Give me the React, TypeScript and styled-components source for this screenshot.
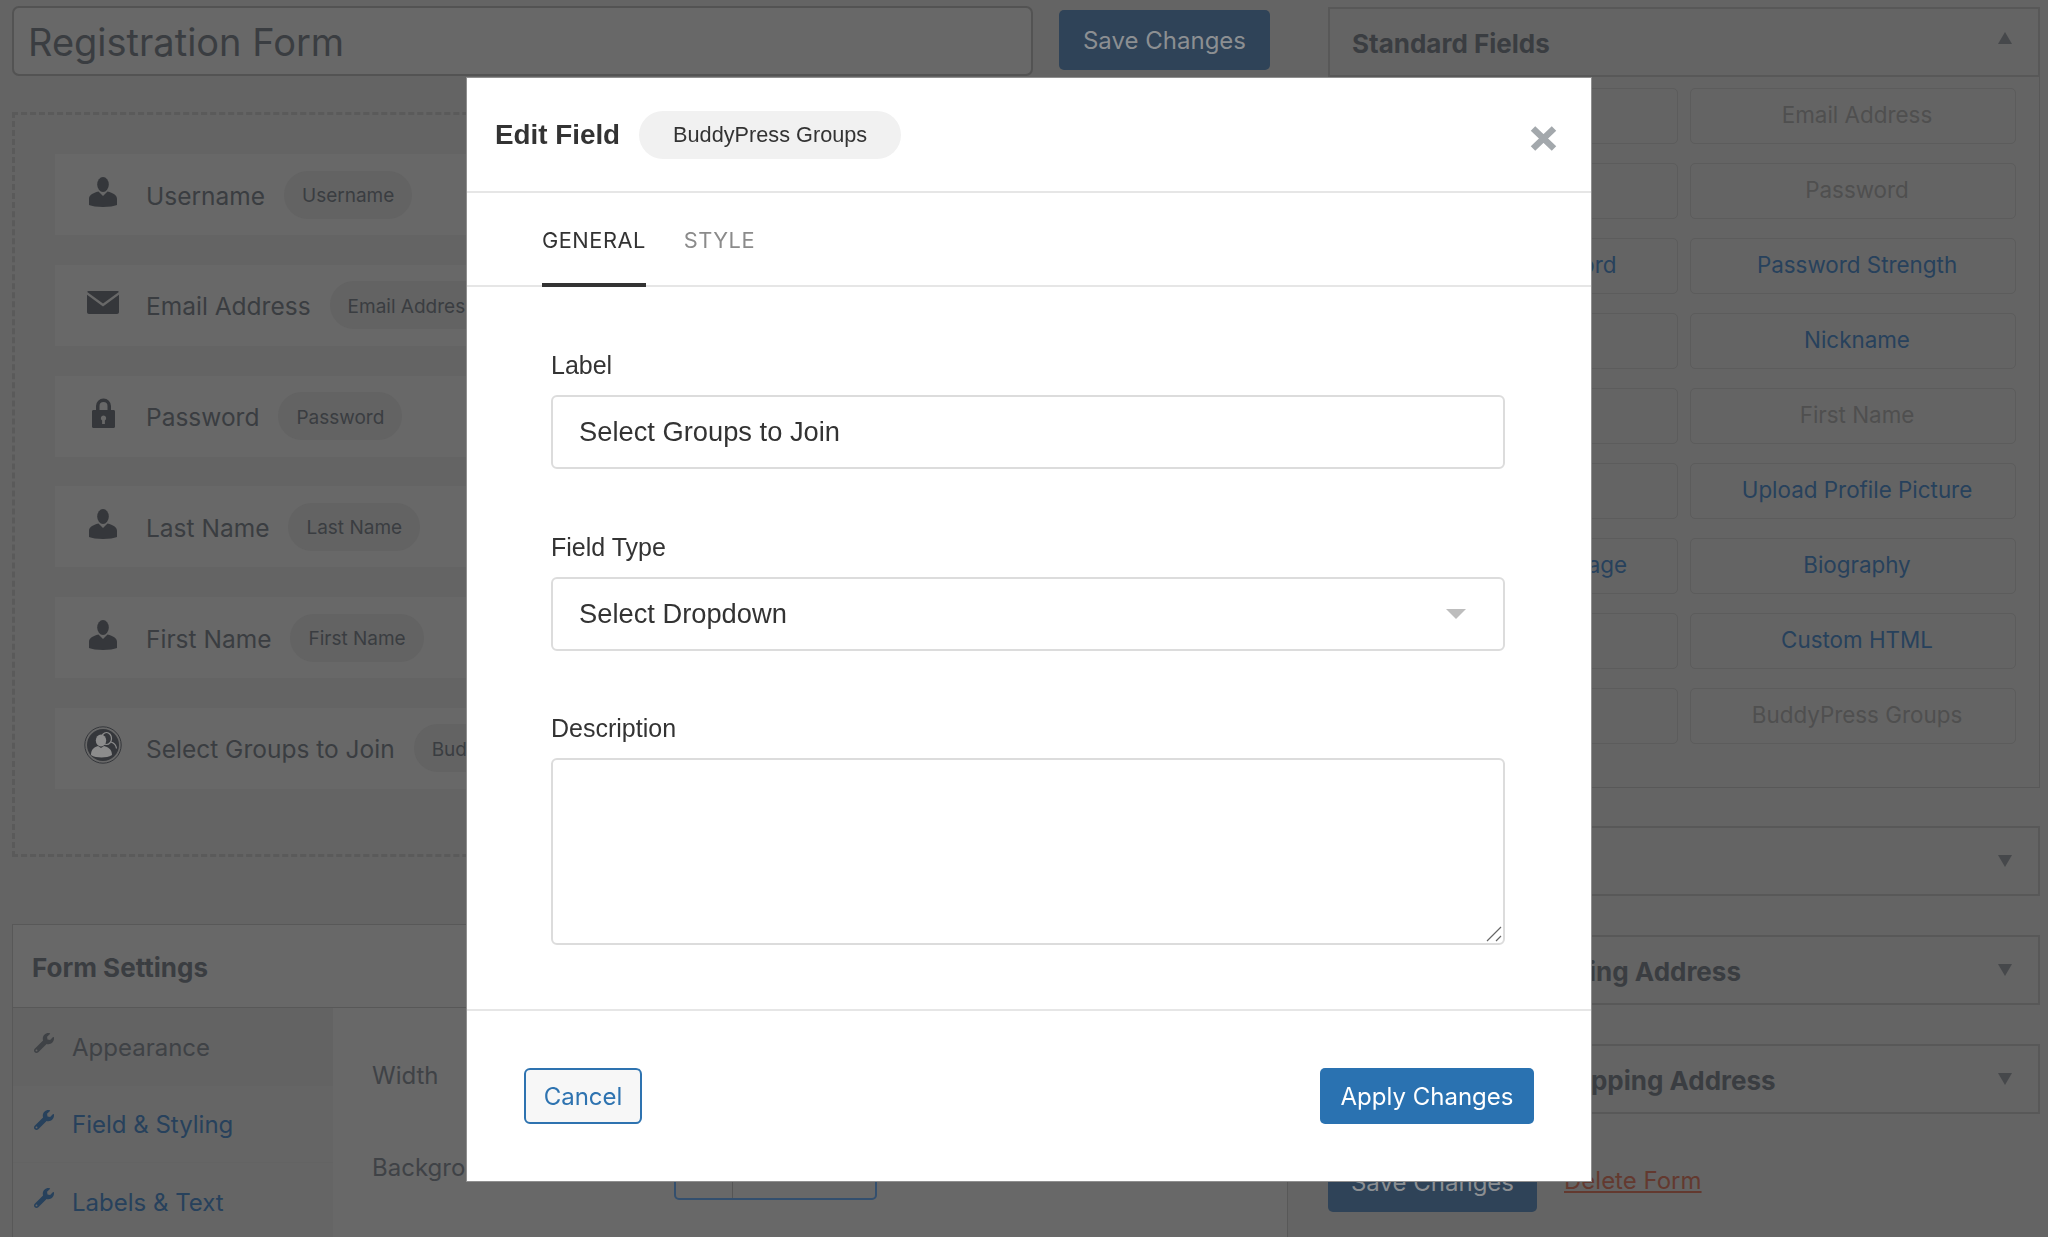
import React from "react"
import styled, { createGlobalStyle } from "styled-components"
import { FaWrench } from "react-icons/fa"

const GlobalStyle = createGlobalStyle`
  * { box-sizing: border-box; }
  html, body { margin: 0; padding: 0; height: 1237px; overflow: hidden; background: #646464; }
  body { font-family: Inter, "Noto Sans", sans-serif; color: #3d4044; }
`

const Page = styled.div`
  display: grid;
  grid-template-columns: 1276px 712px;
  column-gap: 40px;
  align-items: start;
  height: 1237px;
  padding: 6px 0 0 12px;
  overflow: hidden;
`

const LeftColumn = styled.div`
  display: flex;
  flex-direction: column;
`

const TitleRow = styled.div`
  display: flex;
  align-items: center;
  gap: 26px;
`

const TitleInput = styled.div`
  width: 1021px;
  height: 70px;
  display: flex;
  align-items: center;
  padding: 2px 0 0 14px;
  border: 2px solid #535353;
  border-radius: 7px;
  background: #686868;
  font-size: 38px;
  color: #3a3d41;
`

const SaveButton = styled.div<{ $width: number; $lift?: number }>`
  width: ${(p) => p.$width}px;
  height: 60px;
  margin-top: ${(p) => p.$lift ?? 0}px;
  display: flex;
  align-items: center;
  justify-content: center;
  background: #2f4358;
  border-radius: 5px;
  font-size: 24px;
  color: #8c8f92;
`

const DropZone = styled.div`
  margin-top: 36px;
  height: 745px;
  padding: 38px 0 0 39px;
  border: 3px dashed #5a5a5a;
  display: flex;
  flex-direction: column;
  gap: 27.8px;
`

const FieldCard = styled.div`
  height: 83px;
  flex: none;
  display: flex;
  align-items: center;
  padding-left: 29px;
  background: #686868;
  border: 1px solid #646464;
`

const CardIcon = styled.div`
  width: 38px;
  display: flex;
  justify-content: center;
  margin: -6px 24px 0 0;
  color: #35373b;
`

const CardLabel = styled.span`
  margin-top: 2px;
  font-size: 24.5px;
  color: #3a3d41;
`

const NamePill = styled.span`
  margin-left: 19px;
  height: 48px;
  display: flex;
  align-items: center;
  padding: 2px 18px 0;
  border-radius: 24px;
  background: #636363;
  font-size: 19px;
  color: #3a3d41;
`

const SettingsPanel = styled.div`
  margin-top: 67px;
  height: 400px;
  border: 1px solid #585858;
  background: #686868;
`

const SettingsHeader = styled.div`
  height: 83px;
  display: flex;
  align-items: center;
  padding: 2px 0 0 19px;
  border-bottom: 1px solid #585858;
  font-size: 26px;
  font-weight: 700;
  color: #3a3d41;
`

const SettingsBody = styled.div`
  display: flex;
`

const SettingsNav = styled.div`
  width: 320px;
  display: flex;
  flex-direction: column;
  background: #656565;
`

const NavItem = styled.div<{ $active?: boolean }>`
  height: 77.5px;
  display: flex;
  align-items: center;
  gap: 18px;
  padding: 2px 0 0 21px;
  background: ${(p) => (p.$active ? "#636363" : "transparent")};
  border-bottom: 1px solid #636363;
  font-size: 24px;
  color: ${(p) => (p.$active ? "#3f4246" : "#27415c")};

  svg {
    margin-top: -9px;
  }
`

const SettingsContent = styled.div`
  flex: 1;
  display: flex;
  flex-direction: column;
  gap: 35px;
  padding: 37px 0 0 39px;
`

const SettingRow = styled.div`
  height: 60px;
  display: flex;
  align-items: center;
  font-size: 24px;
  color: #3f4246;
`

const SettingName = styled.span`
  width: 302px;
  margin-top: -5px;
`

const ColorControl = styled.div`
  width: 203px;
  height: 60px;
  display: flex;
  border: 2px solid #334f6e;
  border-radius: 5px;
`

const ColorSwatch = styled.div`
  width: 57px;
  border-right: 1px solid #555;
`

const RightColumn = styled.div`
  display: flex;
  flex-direction: column;
  padding-top: 1px;
`

const FieldsPanel = styled.div<{ $gap?: number }>`
  margin-top: ${(p) => p.$gap ?? 0}px;
  display: flex;
  flex-direction: column;
`

const PanelHeader = styled.div`
  height: 70px;
  display: flex;
  align-items: center;
  justify-content: space-between;
  padding: 2px 26px 0 22px;
  border: 2px solid #585858;
  font-size: 26px;
  font-weight: 700;
  color: #3a3d41;
  white-space: nowrap;
`

const Caret = styled.span<{ $up?: boolean }>`
  width: 0;
  height: 0;
  margin-top: ${(p) => (p.$up ? -10 : -2)}px;
  border-left: 7px solid transparent;
  border-right: 7px solid transparent;
  border-${(p) => (p.$up ? "bottom" : "top")}: 12px solid #46484b;
`

const PanelBody = styled.div`
  height: 711px;
  display: grid;
  grid-template-columns: 326px 326px;
  grid-auto-rows: 56px;
  gap: 19px 12px;
  padding: 11px 0 0 23px;
  border: 1px solid #585858;
  border-top: 0;
`

const FieldButton = styled.div<{ $enabled?: boolean }>`
  display: flex;
  align-items: center;
  justify-content: center;
  padding: 0 0 3px 8px;
  border: 1px solid #5c5c5c;
  border-radius: 5px;
  font-size: 22.4px;
  color: ${(p) => (p.$enabled ? "#27415c" : "#4f4f4f")};
`

const PanelFooter = styled.div`
  margin-top: 38px;
  display: flex;
  align-items: center;
  gap: 27px;
`

const DeleteLink = styled.a`
  margin-top: -4px;
  font-size: 24px;
  color: #63392f;
  text-decoration: underline;
`

const Backdrop = styled.div`
  position: fixed;
  inset: 0;
  padding: 78px 0 0 467px;
`

const Modal = styled.div`
  width: 1124px;
  height: 1103px;
  display: flex;
  flex-direction: column;
  background: #fff;
  box-shadow: 0 0 0 1px #8f8f8f;
  color: #333;
`

const ModalHeader = styled.div`
  height: 115px;
  flex: none;
  display: flex;
  align-items: center;
  padding: 0 34px 0 28px;
  border-bottom: 2px solid #e6e6e6;
`

const ModalTitle = styled.h2`
  margin: 0 19px 0 0;
  font-family: "Liberation Sans", Arial, sans-serif;
  font-size: 27.8px;
  font-weight: 700;
  color: #333;
`

const TypePill = styled.span`
  height: 48px;
  display: flex;
  align-items: center;
  padding: 0 34px;
  border-radius: 24px;
  background: #f1f1f1;
  font-family: "Liberation Sans", Arial, sans-serif;
  font-size: 21.7px;
  color: #333;
`

const CloseButton = styled.button`
  margin: 7px 0 0 auto;
  padding: 0;
  border: 0;
  background: none;
  display: flex;
  color: #a3a8ac;
`

const Tabs = styled.div`
  height: 94px;
  flex: none;
  display: flex;
  gap: 38px;
  padding-left: 75px;
  border-bottom: 2px solid #e6e6e6;
`

const Tab = styled.div<{ $active?: boolean }>`
  height: 94px;
  padding-top: 33px;
  font-size: 21.8px;
  letter-spacing: 0.5px;
  line-height: 28px;
  color: ${(p) => (p.$active ? "#333" : "#8b8b8b")};
  border-bottom: ${(p) => (p.$active ? "4px solid #333" : "0")};
`

const FormBody = styled.div`
  flex: 1;
  display: flex;
  flex-direction: column;
  gap: 62.5px;
  padding: 63px 86px 0 84px;
  font-family: "Liberation Sans", Arial, sans-serif;
`

const Field = styled.div`
  display: flex;
  flex-direction: column;
  gap: 15px;
  position: relative;
`

const FieldLabel = styled.label`
  font-size: 25px;
  line-height: 30px;
  color: #333;
`

const TextInput = styled.input`
  width: 100%;
  height: 74px;
  padding: 0 26px;
  border: 2px solid #dcdcdc;
  border-radius: 6px;
  background: #fff;
  font-family: inherit;
  font-size: 27.3px;
  color: #333;
  outline: none;
`

const SelectInput = styled.select`
  width: 100%;
  height: 74px;
  padding: 0 26px;
  border: 2px solid #dcdcdc;
  border-radius: 6px;
  background: #fff;
  font-family: inherit;
  font-size: 27.3px;
  color: #333;
  appearance: none;
  outline: none;
`

const SelectCaret = styled.span`
  position: absolute;
  right: 39px;
  bottom: 32px;
  width: 0;
  height: 0;
  border-left: 10px solid transparent;
  border-right: 10px solid transparent;
  border-top: 10px solid #bdbdbd;
`

const TextArea = styled.textarea`
  width: 100%;
  height: 187px;
  padding: 12px 26px;
  border: 2px solid #dcdcdc;
  border-radius: 6px;
  background: #fff;
  font-family: inherit;
  font-size: 27px;
  outline: none;
  resize: none;
  display: block;
`

const ResizeGrip = styled.svg`
  position: absolute;
  right: 3px;
  bottom: 3px;
`

const ModalFooter = styled.div`
  height: 172px;
  flex: none;
  display: flex;
  justify-content: space-between;
  padding: 57px 57px 0;
  border-top: 2px solid #e6e6e6;
`

const CancelButton = styled.button`
  width: 118px;
  height: 56px;
  border: 2px solid #2e73b0;
  border-radius: 6px;
  background: #f7f7f7;
  font-family: inherit;
  font-size: 24px;
  color: #2e73b0;
`

const ApplyButton = styled.button`
  width: 214px;
  height: 56px;
  border: 0;
  border-radius: 5px;
  background: #2a72b1;
  font-family: inherit;
  font-size: 24px;
  color: #fff;
`

const UserIcon = () => (
  <svg width="28" height="30" viewBox="0 0 28 30" fill="currentColor">
    <ellipse cx="14" cy="7.5" rx="5.8" ry="7.5" />
    <path d="M9.5 14.5 14 19l4.5-4.5c5.5 1.6 9.5 3.4 9.5 7.5v6c-3 1.2-8 2-14 2S3 29.200 0 28v-6c0-4.100 4-5.900 9.500-7.500z" />
  </svg>
)

const MailIcon = () => (
  <svg width="32" height="23" viewBox="0 0 32 23" fill="currentColor">
    <path d="M2 0h28c1 0 1.600.4 1.800 1L16 12.500.2 1C.4.400 1 0 2 0z" />
    <path d="M0 3.800 16 15.500 32 3.800V21c0 1.200-.8 2-2 2H2c-1.200 0-2-.8-2-2z" />
  </svg>
)

const LockIcon = () => (
  <svg width="23" height="30" viewBox="0 0 23 30" fill="currentColor" fillRule="evenodd">
    <path d="M4 12V8a7.500 7.500 0 0 1 15 0v4h2.500c.9 0 1.500.6 1.500 1.500V28.500c0 .9-.6 1.500-1.500 1.500h-20C.6 30 0 29.400 0 28.500V13.500C0 12.600.6 12 1.500 12zM7.500 12h8V8a4 4 0 0 0-8 0zM11.500 17.500a2.700 2.700 0 0 0-1.400 5V26h2.800v-3.500a2.700 2.700 0 0 0-1.400-5z" />
  </svg>
)

const GroupIcon = () => (
  <svg width="38" height="38" viewBox="0 0 38 38">
    <circle cx="19" cy="19" r="18.200" fill="none" stroke="currentColor" strokeWidth="1" />
    <circle cx="19" cy="19" r="16" fill="currentColor" />
    <ellipse cx="22.500" cy="12.500" rx="5" ry="6" fill="none" stroke="#8c8c8c" strokeWidth="1.200" />
    <path d="M27 16c3 1 5 2.500 5.500 6.500" fill="none" stroke="#8c8c8c" strokeWidth="1.200" />
    <ellipse cx="17" cy="14.500" rx="5.200" ry="6" fill="#8c8c8c" />
    <path d="M7 29c0-6 3.500-8 7-9l3 2 3-2c4 1 8 3 8 9-3 1.800-6.500 2.500-10.500 2.500S9.500 30.800 7 29z" fill="#8c8c8c" />
  </svg>
)

const CloseIcon = () => (
  <svg width="27" height="25" viewBox="0 0 27 25" fill="none" stroke="currentColor" strokeWidth="6.500">
    <path d="M3 2.500 24 22.500M24 2.500 3 22.500" />
  </svg>
)

const cards = [
  { label: "Username", icon: <UserIcon /> },
  { label: "Email Address", icon: <MailIcon /> },
  { label: "Password", icon: <LockIcon /> },
  { label: "Last Name", icon: <UserIcon /> },
  { label: "First Name", icon: <UserIcon /> },
  { label: "Select Groups to Join", pill: "BuddyPress Groups", icon: <GroupIcon /> },
]

const fieldButtons = [
  { label: "Username" },
  { label: "Email Address" },
  { label: "Website", enabled: true },
  { label: "Password" },
  { label: "Confirm Password", enabled: true },
  { label: "Password Strength", enabled: true },
  { label: "Last Name" },
  { label: "Nickname", enabled: true },
  { label: "Display Name", enabled: true },
  { label: "First Name" },
  { label: "Select Role", enabled: true },
  { label: "Upload Profile Picture", enabled: true },
  { label: "Upload Cover Image", enabled: true },
  { label: "Biography", enabled: true },
  { label: "Terms", enabled: true },
  { label: "Custom HTML", enabled: true },
  { label: "reCAPTCHA", enabled: true },
  { label: "BuddyPress Groups" },
]

const App: React.FC = () => (
  <>
    <GlobalStyle />
    <Page>
      <LeftColumn>
        <TitleRow>
          <TitleInput>Registration Form</TitleInput>
          <SaveButton $width={211} $lift={-2}>Save Changes</SaveButton>
        </TitleRow>

        <DropZone>
          {cards.map((card) => (
            <FieldCard key={card.label}>
              <CardIcon>{card.icon}</CardIcon>
              <CardLabel>{card.label}</CardLabel>
              <NamePill>{card.pill ?? card.label}</NamePill>
            </FieldCard>
          ))}
        </DropZone>

        <SettingsPanel>
          <SettingsHeader>Form Settings</SettingsHeader>
          <SettingsBody>
            <SettingsNav>
              <NavItem $active>
                <FaWrench size={20} />
                Appearance
              </NavItem>
              <NavItem>
                <FaWrench size={20} />
                Field &amp; Styling
              </NavItem>
              <NavItem>
                <FaWrench size={20} />
                Labels &amp; Text
              </NavItem>
            </SettingsNav>
            <SettingsContent>
              <SettingRow>Width</SettingRow>
              <SettingRow>
                <SettingName>Background Color</SettingName>
                <ColorControl>
                  <ColorSwatch />
                </ColorControl>
              </SettingRow>
            </SettingsContent>
          </SettingsBody>
        </SettingsPanel>
      </LeftColumn>

      <RightColumn>
        <FieldsPanel>
          <PanelHeader>
            Standard Fields
            <Caret $up />
          </PanelHeader>
          <PanelBody>
            {fieldButtons.map((field) => (
              <FieldButton key={field.label} $enabled={field.enabled}>
                {field.label}
              </FieldButton>
            ))}
          </PanelBody>
        </FieldsPanel>
        <FieldsPanel $gap={38}>
          <PanelHeader>
            Advanced Fields
            <Caret />
          </PanelHeader>
        </FieldsPanel>
        <FieldsPanel $gap={39}>
          <PanelHeader>
            Woocommerce Billing Address
            <Caret />
          </PanelHeader>
        </FieldsPanel>
        <FieldsPanel $gap={39}>
          <PanelHeader>
            Woocommerce Shipping Address
            <Caret />
          </PanelHeader>
        </FieldsPanel>
        <PanelFooter>
          <SaveButton $width={209}>Save Changes</SaveButton>
          <DeleteLink>Delete Form</DeleteLink>
        </PanelFooter>
      </RightColumn>
    </Page>

    <Backdrop>
      <Modal>
        <ModalHeader>
          <ModalTitle>Edit Field</ModalTitle>
          <TypePill>BuddyPress Groups</TypePill>
          <CloseButton>
            <CloseIcon />
          </CloseButton>
        </ModalHeader>
        <Tabs>
          <Tab $active>GENERAL</Tab>
          <Tab>STYLE</Tab>
        </Tabs>
        <FormBody>
          <Field>
            <FieldLabel>Label</FieldLabel>
            <TextInput defaultValue="Select Groups to Join" />
          </Field>
          <Field>
            <FieldLabel>Field Type</FieldLabel>
            <SelectInput defaultValue="select">
              <option value="select">Select Dropdown</option>
            </SelectInput>
            <SelectCaret />
          </Field>
          <Field>
            <FieldLabel>Description</FieldLabel>
            <TextArea />
            <ResizeGrip width="16" height="16" viewBox="0 0 16 16" fill="none" stroke="#666" strokeWidth="1.2">
              <path d="M1 15 15 1M10 15l5-5" />
            </ResizeGrip>
          </Field>
        </FormBody>
        <ModalFooter>
          <CancelButton>Cancel</CancelButton>
          <ApplyButton>Apply Changes</ApplyButton>
        </ModalFooter>
      </Modal>
    </Backdrop>
  </>
)

export default App
